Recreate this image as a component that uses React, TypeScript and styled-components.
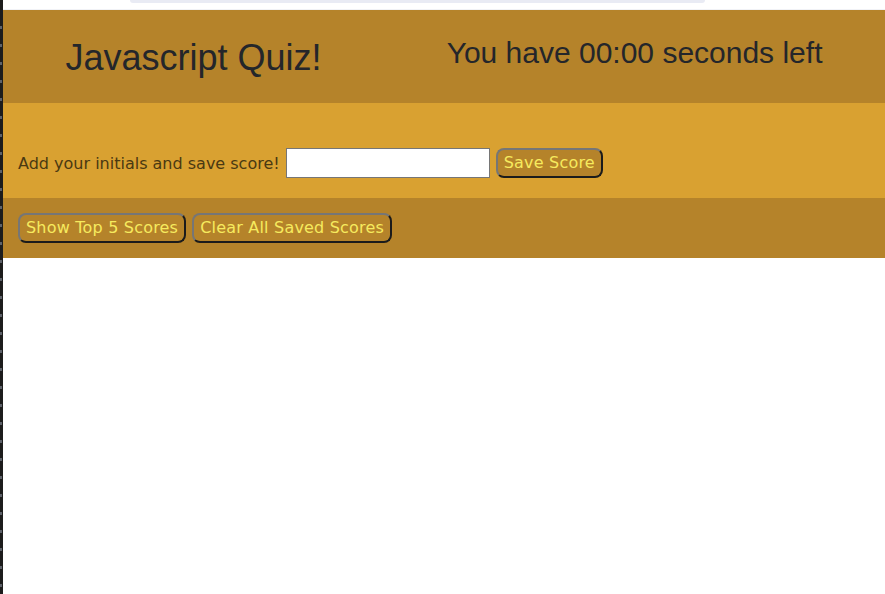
import React, { useState } from 'react'
import styled, { createGlobalStyle } from 'styled-components'

const GlobalStyle = createGlobalStyle`
  html, body {
    margin: 0;
    padding: 0;
    background: #ffffff;
  }
  #root {
    height: 100vh;
  }
`

const Frame = styled.div`
  display: flex;
  height: 100vh;
  overflow: hidden;
`

// sliver of the code editor next to the browser window
const EditorEdge = styled.div`
  width: 3px;
  flex-shrink: 0;
  background-color: #1c1c1c;
  background-image: repeating-linear-gradient(
    to bottom,
    transparent 0 6px,
    #5d6169 6px 9px,
    transparent 9px 18px
  );
  background-size: 2px 100%;
  background-repeat: no-repeat;
  background-position: 0 20px;
`

const Page = styled.div`
  flex: 1;
  display: flex;
  flex-direction: column;
  min-width: 0;
`

const TopStrip = styled.div`
  height: 10px;
  background: #ffffff;
  border-bottom: 1px solid #f1f2f6;
  box-sizing: border-box;
`

const AddressTab = styled.div`
  margin-left: 127px;
  width: 575px;
  height: 3px;
  background: #e9ebf4;
  border-radius: 0 0 8px 8px;
`

const Header = styled.header`
  display: flex;
  justify-content: space-around;
  align-items: flex-start;
  height: 93px;
  background: #b5832a;
  color: #24262a;
  font-family: "Liberation Sans", Arial, sans-serif;
`

const Title = styled.h1`
  margin: 27px 0 0;
  font-size: 36px;
  font-weight: 400;
`

const Timer = styled.h2`
  margin: 26px 0 0;
  font-size: 30px;
  font-weight: 400;
`

const ScoreForm = styled.form`
  display: flex;
  align-items: center;
  gap: 6px;
  padding: 45px 15px 20px;
  background: #d9a131;
  font-family: "DejaVu Sans", Verdana, sans-serif;
  font-size: 16px;
`

const Label = styled.label`
  color: #4a3912;
`

const InitialsInput = styled.input`
  width: 204px;
  height: 30px;
  box-sizing: border-box;
  border: 1px solid #767676;
  background: #ffffff;
  padding: 2px 4px;
  font-size: 16px;
  outline: none;
`

const Controls = styled.div`
  display: flex;
  gap: 6px;
  padding: 15px;
  background: #b5832a;
`

const Button = styled.button`
  height: 30px;
  box-sizing: border-box;
  padding: 0 6px;
  border: 2px solid;
  border-color: #767676 #1b1b1b #1b1b1b #767676;
  border-radius: 8px;
  background: #b5832a;
  color: #f6ea5e;
  font-family: "DejaVu Sans", Verdana, sans-serif;
  font-size: 16px;
  letter-spacing: 0.2px;
  line-height: 1;
  cursor: pointer;
`

function App() {
  const [initials, setInitials] = useState('')

  return (
    <>
      <GlobalStyle />
      <Frame>
        <EditorEdge />
        <Page>
          <TopStrip>
            <AddressTab />
          </TopStrip>
          <Header>
            <Title>Javascript Quiz!</Title>
            <Timer>You have 00:00 seconds left</Timer>
          </Header>
          <ScoreForm onSubmit={(e) => e.preventDefault()}>
            <Label htmlFor="initials">Add your initials and save score!</Label>
            <InitialsInput
              id="initials"
              value={initials}
              onChange={(e) => setInitials(e.target.value)}
            />
            <Button type="submit">Save Score</Button>
          </ScoreForm>
          <Controls>
            <Button>Show Top 5 Scores</Button>
            <Button>Clear All Saved Scores</Button>
          </Controls>
        </Page>
      </Frame>
    </>
  )
}

export default App
